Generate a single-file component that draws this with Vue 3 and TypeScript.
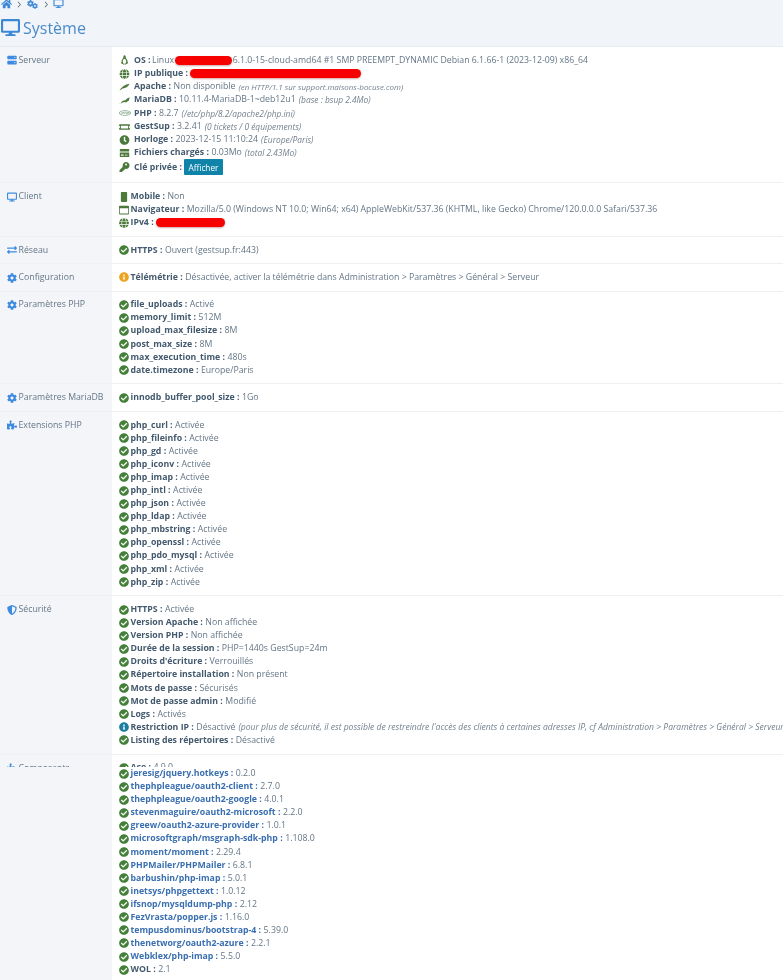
<script setup lang="ts">
const P: Record<string, [string, string]> = {
  check: ['0 0 512 512', 'M504 256c0 136.967-111.033 248-248 248S8 392.967 8 256 119.033 8 256 8s248 111.033 248 248zM227.314 387.314l184-184c6.248-6.248 6.248-16.379 0-22.627l-22.627-22.627c-6.248-6.249-16.379-6.249-22.628 0L216 308.118l-70.059-70.059c-6.248-6.248-16.379-6.248-22.628 0l-22.627 22.627c-6.248 6.248-6.248 16.379 0 22.627l104 104c6.249 6.249 16.379 6.249 22.628.001z'],
  desktop: ['0 0 576 512', 'M528 0H48C21.5 0 0 21.5 0 48v320c0 26.5 21.5 48 48 48h192l-16 48h-72c-13.3 0-24 10.7-24 24s10.7 24 24 24h272c13.3 0 24-10.7 24-24s-10.7-24-24-24h-72l-16-48h192c26.5 0 48-21.5 48-48V48c0-26.5-21.5-48-48-48zm-16 352H64V64h448v288z'],
  home: ['0 0 576 512', 'M280.37 148.26L96 300.11V464a16 16 0 0 0 16 16l112.06-.29a16 16 0 0 0 15.92-16V368a16 16 0 0 1 16-16h64a16 16 0 0 1 16 16v95.64a16 16 0 0 0 16 16.05L464 480a16 16 0 0 0 16-16V300L295.67 148.26a12.19 12.19 0 0 0-15.3 0zM571.6 251.47L488 182.56V44.05a12 12 0 0 0-12-12h-56a12 12 0 0 0-12 12v72.61L318.47 43a48 48 0 0 0-61 0L4.34 251.47a12 12 0 0 0-1.6 16.9l25.5 31A12 12 0 0 0 45.15 301l235.22-193.74a12.19 12.19 0 0 1 15.3 0L530.9 301a12 12 0 0 0 16.9-1.6l25.5-31a12 12 0 0 0-1.7-16.93z'],
  cog: ['0 0 512 512', 'M487.4 315.7l-42.6-24.6c4.3-23.2 4.3-47 0-70.2l42.6-24.6c4.9-2.8 7.1-8.6 5.5-14-11.1-35.6-30-67.8-54.7-94.6-3.8-4.1-10-5.1-14.8-2.3L380.8 110c-17.9-15.4-38.5-27.3-60.8-35.1V25.8c0-5.6-3.9-10.5-9.4-11.7-36.7-8.2-74.3-7.8-109.2 0-5.5 1.2-9.4 6.1-9.4 11.7V75c-22.2 7.9-42.8 19.8-60.8 35.1L88.7 85.5c-4.9-2.8-11-1.9-14.8 2.3-24.7 26.7-43.6 58.9-54.7 94.6-1.7 5.4.6 11.2 5.5 14L67.3 221c-4.3 23.2-4.3 47 0 70.2l-42.6 24.6c-4.9 2.8-7.1 8.6-5.5 14 11.1 35.6 30 67.8 54.7 94.6 3.8 4.1 10 5.1 14.8 2.3l42.6-24.6c17.9 15.4 38.5 27.3 60.8 35.1v49.2c0 5.6 3.9 10.5 9.4 11.7 36.7 8.2 74.3 7.8 109.2 0 5.5-1.2 9.4-6.1 9.4-11.7v-49.2c22.2-7.9 42.8-19.8 60.8-35.1l42.6 24.6c4.9 2.8 11 1.9 14.8-2.3 24.7-26.7 43.6-58.9 54.7-94.6 1.5-5.5-.7-11.3-5.6-14.1zM256 336c-44.1 0-80-35.9-80-80s35.9-80 80-80 80 35.9 80 80-35.9 80-80 80z'],
  server: ['0 0 512 512', 'M48 32h416a32 32 0 0 1 32 32v120a32 32 0 0 1-32 32H48a32 32 0 0 1-32-32V64a32 32 0 0 1 32-32zm0 264h416a32 32 0 0 1 32 32v120a32 32 0 0 1-32 32H48a32 32 0 0 1-32-32V328a32 32 0 0 1 32-32zM400 96a28 28 0 1 0 0 56 28 28 0 0 0 0-56zm0 264a28 28 0 1 0 0 56 28 28 0 0 0 0-56z'],
  exchange: ['0 0 512 512', 'M0 168v-16c0-13.3 10.7-24 24-24h360V80c0-21.4 25.9-32 41-17l80 80c9.4 9.4 9.4 24.6 0 34l-80 80c-15 15-41 4.4-41-17v-48H24c-13.3 0-24-10.7-24-24zm488 152H128v-48c0-21.3-25.9-32-41-17l-80 80c-9.4 9.4-9.4 24.6 0 34l80 80c15 15 41 4.4 41-17v-48h360c13.3 0 24-10.7 24-24v-16c0-13.3-10.7-24-24-24z'],
  puzzle: ['0 0 576 512', 'M519.442 288.651c-41.519 0-59.5 31.593-82.058 31.593C377.409 320.244 432 144 432 144s-196.288 80-196.288-3.297c0-35.827 36.288-46.25 36.288-85.985C272 19.216 243.885 0 210.539 0c-34.654 0-66.366 18.891-66.366 56.346 0 41.364 31.711 59.277 31.711 81.75C175.885 207.719 0 166.758 0 166.758v333.237s178.635 41.047 178.635-28.662c0-22.473-40-40.107-40-81.471 0-37.456 29.25-56.346 63.577-56.346 33.673 0 61.788 19.216 61.788 54.717 0 39.735-36.288 50.158-36.288 85.985 0 60.803 129.675 25.73 181.23 25.73 0 0-34.725-120.101 25.827-120.101 35.962 0 46.423 36.152 86.308 36.152C556.712 416 576 387.99 576 354.443c0-34.199-18.962-65.792-56.558-65.792z'],
  shield: ['0 0 512 512', 'M466.5 83.7l-192-80a48.15 48.15 0 0 0-36.9 0l-192 80C27.7 91.1 16 108.6 16 128c0 198.5 114.5 335.7 221.5 380.3 11.8 4.9 25.1 4.9 36.9 0C360.1 472.6 496 349.3 496 128c0-19.4-11.7-36.9-29.5-44.3zM256.1 446.3l-.1-381 175.9 73.3c-3.3 151.4-82.1 261.1-175.8 307.7z'],
  globe: ['0 0 496 512', 'M336.5 160C322 70.7 287.8 8 248 8s-74 62.7-88.5 152h177zM152 256c0 22.2 1.2 43.5 3.3 64h185.3c2.1-20.5 3.3-41.8 3.3-64s-1.2-43.5-3.3-64H155.3c-2.1 20.5-3.3 41.8-3.3 64zm324.7-96c-28.6-67.9-86.5-120.4-158-141.6 24.4 33.8 41.2 84.7 50 141.6h108zM177.2 18.4C105.8 39.6 47.8 92.1 19.3 160h108c8.7-56.9 25.5-107.8 49.9-141.6zM487.4 192H372.7c2.1 21 3.3 42.5 3.3 64s-1.2 43-3.3 64h114.6c5.5-20.5 8.6-41.8 8.6-64s-3.1-43.5-8.5-64zM120 256c0-21.5 1.2-43 3.3-64H8.6C3.2 212.5 0 233.8 0 256s3.2 43.5 8.6 64h114.6c-2-21-3.2-42.5-3.2-64zm39.5 96c14.5 89.3 48.7 152 88.5 152s74-62.7 88.5-152h-177zm159.3 141.6c71.4-21.2 129.4-73.7 158-141.6h-108c-8.8 56.9-25.6 107.8-50 141.6zM19.3 352c28.6 67.9 86.5 120.4 158 141.6-24.4-33.8-41.2-84.7-50-141.6h-108z'],
  linux: ['0 0 448 512', 'M224 10c-58 0-62 58-60 110 1 28-14 50-34 78-30 42-62 94-56 146-22 12-34 34-18 56 14 18 8 40 26 48 26 10 48 28 82 36 26 6 42-14 54-14h16c12 0 28 20 54 14 34-8 56-26 82-36 18-8 12-30 26-48 16-22 4-44-18-56 6-52-26-104-56-146-20-28-35-50-34-78 2-52-2-110-64-110zm0 180c40 0 90 70 90 150 0 60-40 110-90 110s-90-50-90-110c0-80 50-150 90-150z'],
  feather: ['0 0 512 512', 'M0 424C110 250 280 120 512 88c-50 120-160 210-290 226-60 8-90 24-120 54l-70 56z'],
  seal: ['0 0 576 512', 'M0 470c36-10 78-4 96-44 20-44 36-100 84-124 52-26 120-8 170-46 40-30 80-96 144-112 26-6 58-6 82-20-6 22-24 30-34 50-18 36-8 94-46 130-12 12-30 6-44 0-16 60-54 60-94 70-14 4-22 28-50 28 14-22 34-34 40-60-46 30-82 24-126 26-60 2-90 66-222 102z'],
  php: ['0 0 640 512', 'M320 104C143 104 0 172 0 256s143 152 320 152 320-68 320-152-143-152-320-152zm0 264C170 368 50 318 50 256s120-112 270-112 270 50 270 112-120 112-270 112zm-170-170h70c36 0 50 20 44 50-6 32-30 50-62 50h-32l-8 38h-40zm22 36l-8 32h22c14 0 22-6 24-16 2-10-2-16-16-16zm138-70h40l-10 48h36c34 0 46 18 40 44l-14 66h-40l14-62c2-10-2-14-12-14h-32l-16 76h-40zm130 34h70c36 0 50 20 44 50-6 32-30 50-62 50h-32l-8 38h-40zm22 36l-8 32h22c14 0 22-6 24-16 2-10-2-16-16-16z'],
  memory: ['0 0 640 512', 'M40 96h560a32 32 0 0 1 32 32v64a48 48 0 0 0 0 128v64a32 32 0 0 1-32 32H40a32 32 0 0 1-32-32v-64a48 48 0 0 0 0-128v-64a32 32 0 0 1 32-32zm72 80v160h416V176z'],
  clock: ['0 0 512 512', 'M256 8C119 8 8 119 8 256s111 248 248 248 248-111 248-248S393 8 256 8zm57 350l-88-64c-3-2-5-6-5-10V116c0-7 5-12 12-12h48c7 0 12 5 12 12v141l63 46c5 4 7 11 3 17l-28 39c-4 5-11 7-17 3z'],
  hdd: ['0 0 512 512', 'M48 48h416a32 32 0 0 1 32 32v96H16V80a32 32 0 0 1 32-32zM16 224h480v208a32 32 0 0 1-32 32H48a32 32 0 0 1-32-32zm64 104v64h128v-64zm200 0v64h40v-64zm80 0v64h40v-64z'],
  key: ['0 0 512 512', 'M512 176c0 97-79 176-176 176-11 0-22-1-33-3l-40 45c-5 5-11 8-18 8h-37v40c0 13-11 24-24 24h-40v40c0 13-11 24-24 24H24c-13 0-24-11-24-24v-78c0-6 3-12 7-17l162-162c-6-19-9-38-9-57C160 79 239 0 336 0s176 79 176 176zM336 80a48 48 0 1 0 0 96 48 48 0 0 0 0-96z'],
  mobile: ['0 0 320 512', 'M272 0H48C22 0 0 22 0 48v416c0 26 22 48 48 48h224c26 0 48-22 48-48V48c0-26-22-48-48-48z'],
  window: ['0 0 512 512', 'M48 32h416a48 48 0 0 1 48 48v352a48 48 0 0 1-48 48H48a48 48 0 0 1-48-48V80a48 48 0 0 1 48-48zm-8 128v264c0 8 8 16 16 16h400c8 0 16-8 16-16V160z'],
  info: ['0 0 512 512', 'M256 8C119 8 8 119 8 256s111 248 248 248 248-111 248-248S393 8 256 8zm0 110a42 42 0 1 1 0 84 42 42 0 0 1 0-84zm56 254c0 7-5 12-12 12h-88c-7 0-12-5-12-12v-24c0-7 5-12 12-12h12v-64h-12c-7 0-12-5-12-12v-24c0-7 5-12 12-12h64c7 0 12 5 12 12v100h12c7 0 12 5 12 12z'],
  chevron: ['0 0 256 512', 'M50 80l160 176L50 432l-28-28 134-148L22 108z'],
}
type Item = { i?: string; c?: string; b: string; v?: string; e?: string; ec?: string; pill?: number; after?: string; btn?: boolean; link?: boolean }
type Row = { icon: string; label: string; cls?: string; items: Item[] }

const G = 'g'
const ok = (b: string, v: string): Item => ({ i: 'check', c: G, b, v })
const rows: Row[] = [
  { icon: 'server', label: 'Serveur', cls: 'srv', items: [
    { i: 'linux', c: 'olive', b: 'OS :', v: 'Linux', pill: 57, after: '6.1.0-15-cloud-amd64 #1 SMP PREEMPT_DYNAMIC Debian 6.1.66-1 (2023-12-09) x86_64' },
    { i: 'globe', c: 'olive', b: 'IP publique :', pill: 171 },
    { i: 'feather', c: 'olive', b: 'Apache :', v: 'Non disponible', e: '(en HTTP/1.1 sur support.maisons-bocuse.com)', ec: 'e-small' },
    { i: 'seal', c: 'olive', b: 'MariaDB :', v: '10.11.4-MariaDB-1~deb12u1', e: '(base : bsup 2.4Mo)' },
    { i: 'php', c: 'pale', b: 'PHP :', v: '8.2.7', e: '(/etc/php/8.2/apache2/php.ini)' },
    { i: 'memory', c: 'olive', b: 'GestSup :', v: '3.2.41', e: '(0 tickets / 0 équipements)' },
    { i: 'clock', c: 'olive', b: 'Horloge :', v: '2023-12-15 11:10:24', e: '(Europe/Paris)' },
    { i: 'hdd', c: 'olive', b: 'Fichiers chargés :', v: '0.03Mo', e: '(total 2.43Mo)' },
    { i: 'key', c: 'olive', b: 'Clé privée :', btn: true },
  ] },
  { icon: 'desktop', label: 'Client', items: [
    { i: 'mobile', c: 'narrow', b: 'Mobile :', v: 'Non' },
    { i: 'window', c: 'tight', b: 'Navigateur :', v: 'Mozilla/5.0 (Windows NT 10.0; Win64; x64) AppleWebKit/537.36 (KHTML, like Gecko) Chrome/120.0.0.0 Safari/537.36' },
    { i: 'globe', c: 'tight', b: 'IPv4 :', pill: 69 },
  ] },
  { icon: 'exchange', label: 'Réseau', items: [ok('HTTPS :', 'Ouvert (gestsup.fr:443)')] },
  { icon: 'cog', label: 'Configuration', items: [
    { i: 'info', c: 'warn', b: 'Télémétrie :', v: 'Désactivée, activer la télémétrie dans Administration > Paramètres > Général > Serveur' },
  ] },
  { icon: 'cog', label: 'Paramètres PHP', items: [
    ok('file_uploads :', 'Activé'), ok('memory_limit :', '512M'), ok('upload_max_filesize :', '8M'),
    ok('post_max_size :', '8M'), ok('max_execution_time :', '480s'), ok('date.timezone :', 'Europe/Paris'),
  ] },
  { icon: 'cog', label: 'Paramètres MariaDB', items: [ok('innodb_buffer_pool_size :', '1Go')] },
  { icon: 'puzzle', label: 'Extensions PHP', items: ['curl', 'fileinfo', 'gd', 'iconv', 'imap', 'intl', 'json', 'ldap', 'mbstring', 'openssl', 'pdo_mysql', 'xml', 'zip'].map((n) => ok(`php_${n} :`, 'Activée')) },
  { icon: 'shield', label: 'Sécurité', items: [
    ok('HTTPS :', 'Activée'), ok('Version Apache :', 'Non affichée'), ok('Version PHP :', 'Non affichée'),
    ok('Durée de la session :', 'PHP=1440s GestSup=24m'), ok("Droits d'écriture :", 'Verrouillés'),
    ok('Répertoire installation :', 'Non présent'), ok('Mots de passe :', 'Sécurisés'), ok('Mot de passe admin :', 'Modifié'),
    ok('Logs :', 'Activés'),
    { i: 'info', c: 'teal', b: 'Restriction IP :', v: 'Désactivé', e: "(pour plus de sécurité, il est possible de restreindre l'accès des clients à certaines adresses IP, cf Administration > Paramètres > Général > Serveur)", ec: 'e-wide' },
    ok('Listing des répertoires :', 'Désactivé'),
  ] },
]
const lk = (b: string, v: string): Item => ({ i: 'check', c: G, b, v, link: true })
const components: Item[] = [
  lk('jeresig/jquery.hotkeys :', '0.2.0'), lk('thephpleague/oauth2-client :', '2.7.0'), lk('thephpleague/oauth2-google :', '4.0.1'),
  lk('stevenmaguire/oauth2-microsoft :', '2.2.0'), lk('greew/oauth2-azure-provider :', '1.0.1'), lk('microsoftgraph/msgraph-sdk-php :', '1.108.0'),
  lk('moment/moment :', '2.29.4'), lk('PHPMailer/PHPMailer :', '6.8.1'), lk('barbushin/php-imap :', '5.0.1'),
  lk('inetsys/phpgettext :', '1.0.12'), lk('ifsnop/mysqldump-php :', '2.12'), lk('FezVrasta/popper.js :', '1.16.0'),
  lk('tempusdominus/bootstrap-4 :', '5.39.0'), lk('thenetworg/oauth2-azure :', '2.2.1'), lk('Webklex/php-imap :', '5.5.0'), ok('WOL :', '2.1'),
]
</script>

<template>
  <div class="page">
    <nav class="crumbs">
      <svg class="c-home" :viewBox="P.home[0]"><path :d="P.home[1]" /></svg>
      <svg class="c-chev" :viewBox="P.chevron[0]"><path :d="P.chevron[1]" /></svg>
      <span class="c-cogs">
        <svg class="cog-a" :viewBox="P.cog[0]"><path :d="P.cog[1]" /></svg>
        <svg class="cog-b" :viewBox="P.cog[0]"><path :d="P.cog[1]" /></svg>
      </span>
      <svg class="c-chev" :viewBox="P.chevron[0]"><path :d="P.chevron[1]" /></svg>
      <svg class="c-desk" :viewBox="P.desktop[0]"><path :d="P.desktop[1]" /></svg>
    </nav>
    <h1 class="title">
      <svg :viewBox="P.desktop[0]"><path :d="P.desktop[1]" /></svg>
      <span>Système</span>
    </h1>

    <section v-for="r in rows" :key="r.label" class="row" :class="r.cls">
      <div class="side">
        <svg class="side-icon" :viewBox="P[r.icon][0]"><path :d="P[r.icon][1]" /></svg>
        <span>{{ r.label }}</span>
      </div>
      <div class="main">
        <div v-for="it in r.items" :key="it.b" class="line" :class="{ 'has-btn': it.btn, 'has-after': it.after }">
          <svg class="ico" :class="it.c" :viewBox="P[it.i!][0]"><path fill-rule="evenodd" :d="P[it.i!][1]" /></svg>
          <b>{{ it.b }}</b>
          <span v-if="it.v" class="v">{{ it.v }}</span>
          <i v-if="it.pill" class="pill" :style="{ width: it.pill + 'px' }"></i>
          <span v-if="it.after" class="after">{{ it.after }}</span>
          <em v-if="it.e" :class="it.ec">{{ it.e }}</em>
          <button v-if="it.btn" class="btn" type="button">Afficher</button>
        </div>
      </div>
    </section>

    <section class="row cut">
      <div class="side">
        <svg class="side-icon" :viewBox="P.puzzle[0]"><path :d="P.puzzle[1]" /></svg>
        <span>Composants</span>
      </div>
      <div class="main">
        <div class="line">
          <svg class="ico g" :viewBox="P.check[0]"><path fill-rule="evenodd" :d="P.check[1]" /></svg>
          <b>Ace :</b><span class="v">4.9.0</span>
        </div>
      </div>
    </section>
    <section class="row rest">
      <div class="side"></div>
      <div class="main">
        <div v-for="it in components" :key="it.b" class="line" :class="{ link: it.link }">
          <svg class="ico g" :viewBox="P.check[0]"><path fill-rule="evenodd" :d="P.check[1]" /></svg>
          <b>{{ it.b }}</b>
          <span class="v">{{ it.v }}</span>
        </div>
      </div>
    </section>
  </div>
</template>

<style>
html, body { margin: 0; background: #fff; }
</style>

<style scoped>
.page {
  width: 783px;
  height: 980px;
  overflow: hidden;
  background: #f1f4f8;
  font-family: "Open Sans", "Liberation Sans", sans-serif;
  font-size: 8.75px;
  color: #647686;
  filter: blur(0.3px);
}
.crumbs { height: 10px; display: flex; align-items: flex-start; padding-left: 1px; color: #3d88d6; overflow: hidden; }
.crumbs svg { fill: currentColor; display: block; }
.c-home { width: 11px; height: 10px; margin-top: -1px; }
.c-chev { width: 5px; height: 9px; fill: #555f69 !important; margin: 0 4px 0 5px; }
.c-cogs { position: relative; width: 11px; height: 10px; margin: 0 1px 0 1px; }
.cog-a { position: absolute; left: 0; top: 0; width: 7px; height: 7px; }
.cog-b { position: absolute; left: 5px; top: 3px; width: 6px; height: 6px; }
.c-desk { width: 11px; height: 9px; margin: -1px 0 0 0; }
.title {
  height: 37px;
  margin: 0;
  box-sizing: border-box;
  padding: 7px 0 0 1px;
  display: flex;
  align-items: flex-start;
  gap: 3px;
  font-size: 16px;
  line-height: 22px;
  font-weight: 400;
  color: #4a8bc9;
  border-bottom: 1px solid #e6ebf0;
}
.title svg { width: 19px; height: 17px; fill: #3d88d6; margin-top: 2px; }
.row { display: flex; border-bottom: 1px solid #eef0f3; background: #fff; }
.side {
  width: 112px;
  flex: none;
  box-sizing: border-box;
  background: #f3f5f8;
  padding: 6.9px 0 0 7px;
  line-height: 13.2px;
  display: flex;
  align-items: flex-start;
  gap: 1.5px;
}
.side-icon { width: 10px; height: 10px; fill: #3d8be0; margin-top: 1.6px; flex: none; }
.main { flex: 1; min-width: 0; padding: 6.7px 0 6.6px 7px; }
.line { height: 13.1px; line-height: 13.1px; white-space: nowrap; display: flex; align-items: center; }
.srv .line { height: 13.25px; line-height: 13.25px; }
.srv .line.has-btn { height: 16px; padding-bottom: 1px; box-sizing: border-box; }
.line b { font-weight: 700; color: #43596d; }
.line .v { margin-left: 2.5px; }
.has-after .v { margin-left: 1.5px; }
.has-after .pill { margin-left: 1px; }
.line em { margin-left: 3px; font-size: 8.4px; color: #74828f; }
.line em.e-small { font-size: 7.96px; }
.line em.e-wide { font-size: 8.55px; }
.ico { width: 10px; height: 10px; flex: none; margin-right: 1.5px; }
.ico.g { fill: #44803a; }
.ico.olive { fill: #4c7a3a; width: 11px; margin-right: 4px; }
.ico.pale { fill: #8fb096; width: 12px; margin-right: 3px; }
.ico.warn { fill: #eda41c; }
.ico.teal { fill: #1c7d9f; }
.ico.tight { fill: #4c7a3a; }
.ico.narrow { fill: #4c7a3a; width: 10px; }
.pill {
  display: block;
  height: 9px;
  border-radius: 4.5px;
  background: #f60000;
  box-shadow: 0 1px 2px rgba(120, 0, 0, .35);
  margin-left: 2px;
  flex: none;
}
.after { margin-left: 0.5px; }
.btn {
  margin-left: 2px;
  height: 16px;
  padding: 0 4.5px;
  border: 0;
  border-radius: 1px;
  background: #0f83a8;
  color: #fff;
  font: 400 8.3px "Open Sans", sans-serif;
}
.cut { height: 12.5px; overflow: hidden; border-bottom: 0; }
.rest { height: 213px; border-bottom: 0; }
.rest .main { padding-top: 0; }
.rest .line { height: 13.07px; line-height: 13.07px; }
.rest .side { padding: 0; }
.link b { color: #3a6fb0; }
</style>
